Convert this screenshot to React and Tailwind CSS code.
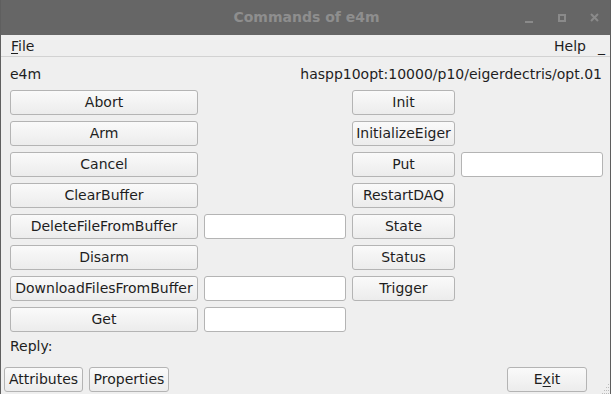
import React from 'react';

const font = { fontFamily: '"DejaVu Sans", sans-serif' };

function Btn({ children, className = '' }) {
  return (
    <div
      className={`h-[25px] flex items-center justify-center border border-[#b4b4b4] rounded-[3px] bg-gradient-to-b from-[#fafafa] to-[#ececec] text-[14px] text-[#1e1e1e] ${className}`}
    >
      {children}
    </div>
  );
}

function Field() {
  return <div className="h-[25px] w-[142px] border border-[#b4b4b4] rounded-[3px] bg-white" />;
}

const left = [
  ['Abort', false],
  ['Arm', false],
  ['Cancel', false],
  ['ClearBuffer', false],
  ['DeleteFileFromBuffer', true],
  ['Disarm', false],
  ['DownloadFilesFromBuffer', true],
  ['Get', true],
];

const right = [
  ['Init', false],
  ['InitializeEiger', false],
  ['Put', true],
  ['RestartDAQ', false],
  ['State', false],
  ['Status', false],
  ['Trigger', false],
];

export default function App() {
  return (
    <div style={font} className="w-[611px] h-[394px] overflow-hidden bg-[#efefef] text-[#1e1e1e] flex flex-col border-x border-[#5f5f5f]">
      {/* title bar */}
      <div className="h-[35px] shrink-0 bg-[#666666] flex items-center relative -mx-px">
        <div className="flex-1 text-center font-bold text-[14px] text-[#8e8e8e] pl-[2px]">Commands of e4m</div>
        <div className="absolute right-0 top-0 h-[35px] flex items-center">
          <span className="w-[33px] flex justify-center">
            <span className="block w-[8px] h-[2px] bg-[#8a8a8a] mt-[8px]" />
          </span>
          <span className="w-[33px] flex justify-center">
            <span className="block w-[8px] h-[8px] border-2 border-[#8a8a8a]" />
          </span>
          <span className="w-[33px] flex justify-center">
            <svg width="9" height="9" viewBox="0 0 9 9">
              <path d="M1 1 L8 8 M8 1 L1 8" stroke="#8a8a8a" strokeWidth="2" />
            </svg>
          </span>
        </div>
      </div>

      {/* menu bar */}
      <div className="h-[22px] shrink-0 flex items-center text-[14px] border-b border-[#d2d2d2] pt-[2px]">
        <span className="ml-[10px]"><span className="underline underline-offset-2">F</span>ile</span>
        <span className="ml-auto mr-[12px]">Help</span>
        <span className="mr-[5px] mt-[2px]">_</span>
      </div>

      {/* header */}
      <div className="flex items-center justify-between text-[14px] pl-[9px] pr-[8px] mt-[8px] h-[18px]">
        <span>e4m</span>
        <span>haspp10opt:10000/p10/eigerdectris/opt.01</span>
      </div>

      {/* commands */}
      <div className="flex mt-[7px] ml-[9px] gap-[6px]">
        <div className="flex flex-col gap-[6px]">
          {left.map(([name, arg]) => (
            <div key={name} className="flex gap-[6px]">
              <Btn className="w-[188px]">{name}</Btn>
              {arg ? <Field /> : <div className="w-[142px]" />}
            </div>
          ))}
        </div>
        <div className="flex flex-col gap-[6px]">
          {right.map(([name, arg]) => (
            <div key={name} className="flex gap-[6px]">
              <Btn className="w-[103px]">{name}</Btn>
              {arg && <Field />}
            </div>
          ))}
        </div>
      </div>

      <div className="text-[14px] ml-[9px] mt-[4px]">Reply:</div>

      {/* bottom */}
      <div className="flex items-center mt-[auto] mb-[2px] ml-[3px] relative">
        <Btn className="w-[79px]">Attributes</Btn>
        <Btn className="w-[80px] ml-[6px]">Properties</Btn>
        <Btn className="w-[80px] ml-auto mr-[23px]">
          <span>E<span className="underline underline-offset-2">x</span>it</span>
        </Btn>
        <svg className="absolute right-0 bottom-[-2px]" width="8" height="12" viewBox="0 0 8 12">
          {[[6, 2], [4, 5], [6, 5], [2, 8], [4, 8], [6, 8], [0, 11], [2, 11], [4, 11], [6, 11]].map(([x, y]) => (
            <rect key={`${x}-${y}`} x={x} y={y} width="1" height="1" fill="#bcbcbc" />
          ))}
        </svg>
      </div>
    </div>
  );
}
